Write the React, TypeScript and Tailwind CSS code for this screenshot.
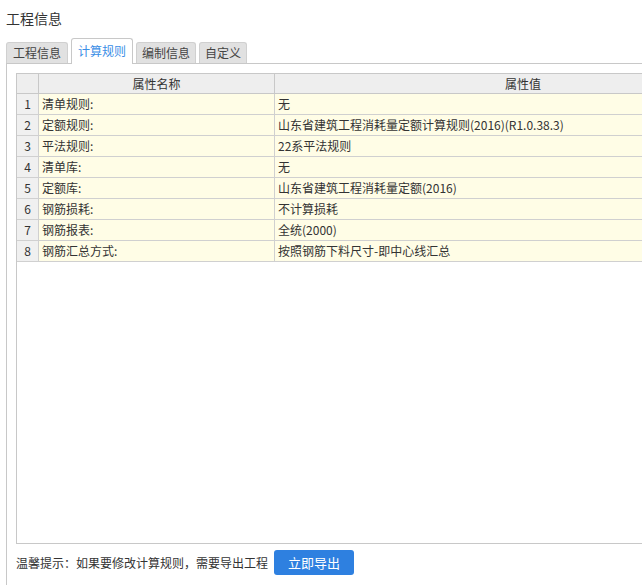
import React from 'react';

const rows: [string, string][] = [
  ['清单规则:', '无'],
  ['定额规则:', '山东省建筑工程消耗量定额计算规则(2016)(R1.0.38.3)'],
  ['平法规则:', '22系平法规则'],
  ['清单库:', '无'],
  ['定额库:', '山东省建筑工程消耗量定额(2016)'],
  ['钢筋损耗:', '不计算损耗'],
  ['钢筋报表:', '全统(2000)'],
  ['钢筋汇总方式:', '按照钢筋下料尺寸-即中心线汇总'],
];

const tabs = ['工程信息', '计算规则', '编制信息', '自定义'];

export default function App() {
  const font = { fontFamily: '"Microsoft YaHei", "Noto Sans CJK SC", "Noto Sans", sans-serif' };

  return (
    <div className="w-[642px] h-[585px] overflow-hidden bg-white text-[#333333]" style={font}>
      {/* Title */}
      <div className="h-[34px] pl-[6px] pt-[8px] text-[14px] leading-[20px] text-[#333333]">工程信息</div>

      {/* Tabs */}
      <div className="flex items-end h-[29px] pl-[6px] gap-[3px] relative z-10">
        {tabs.map((tab, i) =>
          i === 1 ? (
            <div
              key={tab}
              className="h-[26px] px-[6px] bg-white border border-b-0 border-[#c8c8c8] rounded-t-[3px] text-[12px] leading-[24px] text-[#3a8ee6] -mb-px pb-px"
            >
              {tab}
            </div>
          ) : (
            <div
              key={tab}
              className={`h-[21px] ${i === 0 ? 'px-[6px]' : 'px-[5px]'} bg-[#e1e1e1] border border-b-0 border-[#d0d0d0] rounded-t-[3px] text-[12px] leading-[20px] text-[#444444]`}
            >
              {tab}
            </div>
          )
        )}
      </div>

      {/* Panel */}
      <div className="ml-[6px] border-l border-t border-[#c8c8c8] pl-[9px] pt-[9px] h-[522px]">
        <div className="h-[471px] w-[755px] border border-r-0 border-[#c8c8c8] text-[12px]">
          {/* Header */}
          <div className="flex h-[20px] border-b border-[#c8c8c8] bg-[#eeeeee] leading-[19px]">
            <div className="w-[22px] border-r border-[#c8c8c8]" />
            <div className="w-[236px] border-r border-[#c8c8c8] text-center">属性名称</div>
            <div className="flex-1 text-center">属性值</div>
          </div>
          {rows.map(([name, value], i) => (
            <div key={i} className="flex h-[21px] border-b border-[#d0d0d0] leading-[20px]">
              <div className="w-[22px] border-r border-[#d0d0d0] bg-[#f0f0f0] text-center">{i + 1}</div>
              <div className="w-[236px] border-r border-[#d0d0d0] bg-[#fffde6] pl-[3px]">{name}</div>
              <div className="flex-1 bg-[#fffde6] pl-[3px]">{value}</div>
            </div>
          ))}
        </div>

        {/* Footer */}
        <div className="flex items-center h-[25px] mt-[6px] text-[12px]">
          <span>温馨提示：如果要修改计算规则，需要导出工程</span>
          <button className="ml-[6px] w-[80px] h-[25px] rounded-[3px] bg-[#2e80e0] text-white text-[13px] leading-[25px]">
            立即导出
          </button>
        </div>
      </div>
    </div>
  );
}
